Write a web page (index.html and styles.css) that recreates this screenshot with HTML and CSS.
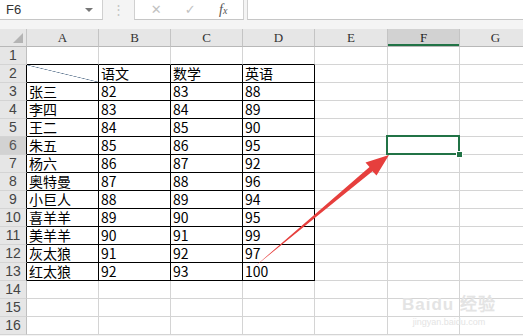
FILE: index.html
```html
<!DOCTYPE html>
<html lang="zh-CN">
<head>
    <meta charset="UTF-8">
    <title>成绩表</title>
    <link rel="stylesheet" href="styles.css">
</head>
<body>
    <div class="topbar">
        <div class="namebox"><span>F6</span><span class="caret"></span></div>
        <div class="grip">⋮</div>
        <div class="fbuttons">
            <span class="btn">✕</span>
            <span class="btn">✓</span>
            <span class="fx">f<small>x</small></span>
        </div>
        <div class="finput"></div>
    </div>

    <table class="sheet">
        <colgroup>
            <col class="c-head"><col class="c-std"><col class="c-std"><col class="c-std"><col class="c-std"><col class="c-wide"><col class="c-std"><col class="c-std">
        </colgroup>
        <tr class="colhead">
            <th class="corner"><span class="tri"></span></th><th>A</th><th>B</th><th>C</th><th>D</th><th>E</th><th class="cur">F</th><th>G</th>
        </tr>
        <tr><th class="rh">1</th><td class="above"></td><td class="above"></td><td class="above"></td><td class="above"></td><td></td><td></td><td></td></tr>
        <tr><th class="rh edge">2</th><td class="b diag"></td><td class="b">语文</td><td class="b">数学</td><td class="b">英语</td><td></td><td></td><td></td></tr>
        <tr><th class="rh edge">3</th><td class="b">张三</td><td class="b">82</td><td class="b">83</td><td class="b">88</td><td></td><td></td><td></td></tr>
        <tr><th class="rh edge">4</th><td class="b">李四</td><td class="b">83</td><td class="b">84</td><td class="b">89</td><td></td><td></td><td></td></tr>
        <tr><th class="rh edge">5</th><td class="b">王二</td><td class="b">84</td><td class="b">85</td><td class="b">90</td><td></td><td class="over"></td><td></td></tr>
        <tr><th class="rh edge cur">6</th><td class="b">朱五</td><td class="b">85</td><td class="b">86</td><td class="b">95</td><td class="before"></td><td class="sel"></td><td></td></tr>
        <tr><th class="rh edge">7</th><td class="b">杨六</td><td class="b">86</td><td class="b">87</td><td class="b">92</td><td></td><td></td><td></td></tr>
        <tr><th class="rh edge">8</th><td class="b">奥特曼</td><td class="b">87</td><td class="b">88</td><td class="b">96</td><td></td><td></td><td></td></tr>
        <tr><th class="rh edge">9</th><td class="b">小巨人</td><td class="b">88</td><td class="b">89</td><td class="b">94</td><td></td><td></td><td></td></tr>
        <tr><th class="rh edge">10</th><td class="b">喜羊羊</td><td class="b">89</td><td class="b">90</td><td class="b">95</td><td></td><td></td><td></td></tr>
        <tr><th class="rh edge">11</th><td class="b">美羊羊</td><td class="b">90</td><td class="b">91</td><td class="b">99</td><td></td><td></td><td></td></tr>
        <tr><th class="rh edge">12</th><td class="b">灰太狼</td><td class="b">91</td><td class="b">92</td><td class="b">97</td><td></td><td></td><td></td></tr>
        <tr><th class="rh edge">13</th><td class="b">红太狼</td><td class="b">92</td><td class="b">93</td><td class="b">100</td><td></td><td></td><td></td></tr>
        <tr><th class="rh">14</th><td></td><td></td><td></td><td></td><td></td><td></td><td></td></tr>
        <tr><th class="rh">15</th><td></td><td></td><td></td><td></td><td></td><td></td><td></td></tr>
        <tr><th class="rh">16</th><td></td><td></td><td></td><td></td><td></td><td></td><td></td></tr>
    </table>

    <!-- red annotation arrow drawn over the sheet -->
    <svg class="arrow" width="523" height="336" viewBox="0 0 523 336">
        <polygon points="253,268 372.5,171.2 376.5,175.5 389,155 365.5,162.5 369.5,167" fill="#e63f3d"/>
    </svg>

    <div class="watermark">
        <div class="wm-logo">Bai<span class="paw">du</span> 经验</div>
        <div class="wm-url">jingyan.baidu.com</div>
    </div>
</body>
</html>
```

FILE: styles.css
```css
body {
    margin: 0;
    width: 523px;
    height: 336px;
    overflow: hidden;
    background-color: #f4f4f4;
    font-family: "Noto Sans CJK SC", sans-serif;
    color: #000;
}

/* formula bar */
.topbar {
    display: flex;
    height: 20px;
    margin-bottom: 9px;
}

.namebox {
    width: 103px;
    display: flex;
    align-items: center;
    justify-content: space-between;
    padding: 0 6px 0 6px;
    box-sizing: border-box;
    background-color: #ffffff;
    border-right: 1px solid #d0d0d0;
    border-bottom: 1px solid #c6c6c6;
    font-family: "Liberation Sans", sans-serif;
    font-size: 13px;
    color: #333;
}

.caret {
    width: 0;
    height: 0;
    margin-right: 3px;
    border-left: 4px solid transparent;
    border-right: 4px solid transparent;
    border-top: 4px solid #777;
}

.grip {
    width: 31px;
    text-align: center;
    color: #c4c4c4;
    font-size: 13px;
    line-height: 18px;
}

.fbuttons {
    width: 110px;
    display: flex;
    align-items: center;
    justify-content: space-around;
    padding: 0 4px;
    box-sizing: border-box;
    background-color: #ffffff;
    border-left: 1px solid #d0d0d0;
    border-right: 1px solid #d0d0d0;
    border-bottom: 1px solid #c6c6c6;
}

.btn {
    color: #c2c2c2;
    font-family: "DejaVu Sans", sans-serif;
    font-size: 13px;
}

.fx {
    font-family: "Liberation Serif", serif;
    font-style: italic;
    font-size: 14px;
    color: #555;
}

.fx small {
    font-size: 10px;
}

.finput {
    flex: 1;
    margin-left: 3px;
    background-color: #ffffff;
    border-left: 1px solid #d0d0d0;
    border-bottom: 1px solid #c6c6c6;
}

/* sheet grid */
.sheet {
    border-collapse: separate;
    border-spacing: 0;
    table-layout: fixed;
    width: 532px;
    background-color: #ffffff;
}

.c-head { width: 27px; }
.c-std { width: 72px; }
.c-wide { width: 73px; }

.sheet th,
.sheet td {
    box-sizing: border-box;
    height: 18px;
    padding: 0;
    border-right: 1px solid #d4d4d4;
    border-bottom: 1px solid #d4d4d4;
    overflow: hidden;
    white-space: nowrap;
}

.sheet td {
    padding-left: 2px;
    font-size: 14px;
    line-height: 17px;
    vertical-align: bottom;
}

.colhead th {
    background-color: #e6e6e6;
    border-right-color: #c4c4c4;
    border-bottom-color: #b8b8b8;
    font-family: "Liberation Serif", serif;
    font-weight: normal;
    font-size: 13px;
    color: #333;
    line-height: 17px;
}

.colhead th.cur {
    background-color: #d2d2d2;
    box-shadow: inset 0 -2px 0 #217346;
    color: #222;
}

.corner {
    position: relative;
}

.tri {
    position: absolute;
    right: 3px;
    bottom: 3px;
    width: 0;
    height: 0;
    border-left: 10px solid transparent;
    border-bottom: 10px solid #b4b4b4;
}

.rh {
    background-color: #e6e6e6;
    border-right-color: #bfbfbf !important;
    font-family: "Liberation Sans", sans-serif;
    font-weight: normal;
    font-size: 14px;
    color: #444;
    line-height: 17px;
}

.rh.edge {
    border-right-color: #000000 !important;
}

.rh.cur {
    background-color: #d2d2d2;
    color: #555;
}

.sheet td.b {
    border-right-color: #000000;
    border-bottom-color: #000000;
}

.sheet td.above {
    border-bottom-color: #000000;
}

.sheet td.diag {
    background: linear-gradient(to top right, transparent calc(50% - 0.6px), #667d96 50%, transparent calc(50% + 0.6px));
}

.sheet td.over {
    border-bottom-color: #217346;
}

.sheet td.before {
    border-right-color: #217346;
}

/* active cell */
.sel {
    position: relative;
    overflow: visible !important;
}

.sel::after {
    content: "";
    position: absolute;
    left: -2px;
    top: -2px;
    right: -1px;
    bottom: -1px;
    border: 2px solid #217346;
}

.sel::before {
    content: "";
    position: absolute;
    right: -4px;
    bottom: -4px;
    width: 5px;
    height: 5px;
    background-color: #217346;
    border: 1px solid #ffffff;
    z-index: 1;
}

.arrow {
    position: absolute;
    left: 0;
    top: 0;
    pointer-events: none;
}

.watermark {
    position: absolute;
    left: 402px;
    top: 290px;
    color: #e4e4e4;
    font-family: "Liberation Sans", sans-serif;
    text-align: center;
}

.wm-logo {
    font-size: 17px;
    font-weight: bold;
    letter-spacing: 1px;
}

.wm-url {
    font-size: 9px;
    margin-top: 2px;
}
```
